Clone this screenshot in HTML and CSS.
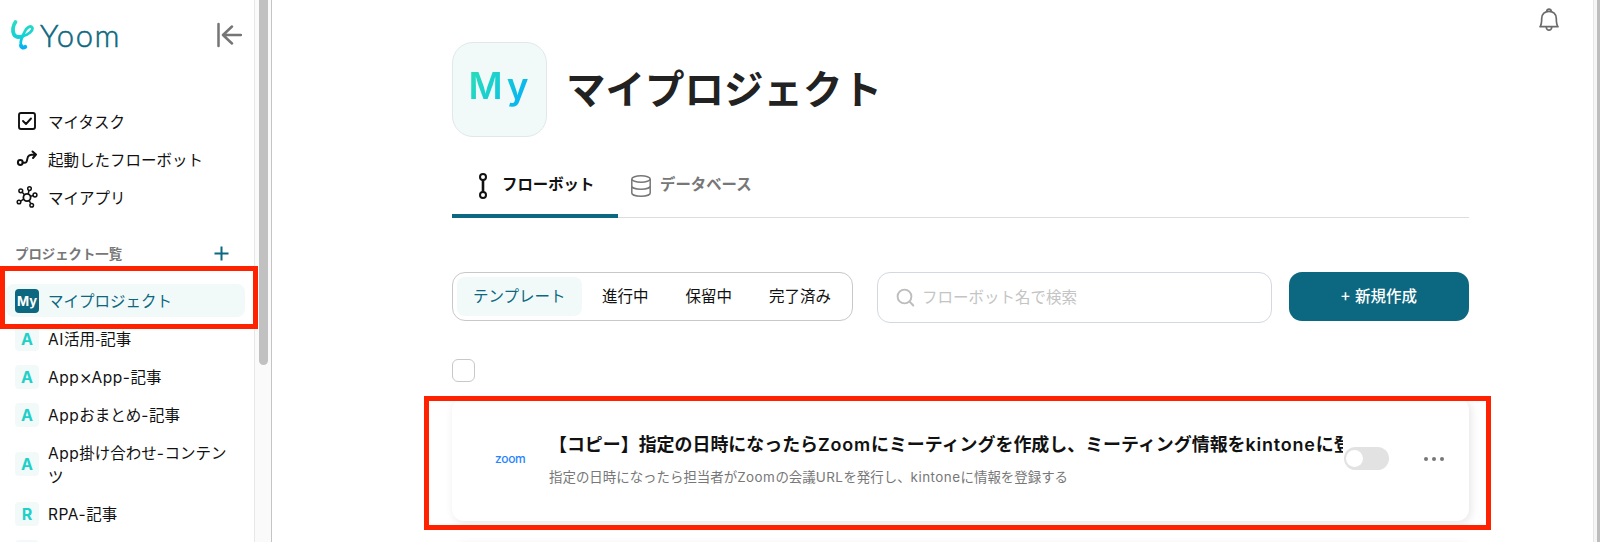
FILE: index.html
```
<!DOCTYPE html>
<html lang="ja">
<head>
<meta charset="utf-8">
<title>Yoom</title>
<link rel="stylesheet" href="styles.css">
</head>
<body>
<div class="app">
  <aside class="sidebar">
    <div class="brand">
      <svg class="brand-mark" width="24" height="32" viewBox="0 0 24 32" fill="none" stroke="url(#g)" stroke-linecap="round" stroke-linejoin="round">
        <defs><linearGradient id="g" x1="0" y1="0" x2="0" y2="32" gradientUnits="userSpaceOnUse"><stop offset=".1" stop-color="#2bdcc0"/><stop offset=".6" stop-color="#10d0d8"/><stop offset="1" stop-color="#00a6ff"/></linearGradient></defs>
        <path stroke-width="3.800" d="M5.500 3C3 6.500 2 12 4 15.500C5.500 18 8.500 18.500 12 17.500"/>
        <path stroke-width="2.800" d="M12 17.500C18.500 16 23.500 11.500 22.200 8.500C20.500 6 16 9 14.500 13C12.500 17.500 10.500 21 10.800 24"/>
        <path stroke-width="4" d="M11 26.500C11.500 29 13.500 29 15.200 27.800"/>
      </svg>
      <span class="brand-name">Yoom</span>
      <svg class="collapse" width="26" height="26" viewBox="0 0 26 26" fill="none" stroke="#757575" stroke-width="2.500" stroke-linecap="round" stroke-linejoin="round"><path d="M2.500 2V24M25 13H7M16 4.500L7 13L16 21.500"/></svg>
    </div>
    <nav class="menu">
      <a class="menu-item"><svg width="22" height="22" viewBox="0 0 22 22" fill="none" stroke="#111" stroke-width="1.900" stroke-linecap="round" stroke-linejoin="round"><rect x="3" y="3" width="16" height="16" rx="2"/><path d="M7 11L10 14L15 8.500"/></svg>マイタスク</a>
      <a class="menu-item"><svg width="22" height="22" viewBox="0 0 22 22" fill="none" stroke="#111" stroke-width="2" stroke-linecap="round" stroke-linejoin="round"><circle cx="4.300" cy="14.500" r="2.400"/><path d="M6.700 14.500C10.500 15.500 11 13.500 11.300 11C11.700 7.500 13.500 6.500 19.500 6.500M16.500 3.500L20 6.500L17 10"/></svg>起動したフローボット</a>
      <a class="menu-item"><svg width="22" height="22" viewBox="0 0 22 22" fill="none" stroke="#111" stroke-width="1.500"><circle cx="11" cy="11.500" r="3.600" stroke-width="1.800"/><circle cx="4.800" cy="4.800" r="1.900"/><circle cx="13.500" cy="2.600" r="1.800"/><circle cx="19" cy="9" r="1.900"/><circle cx="15.700" cy="19.300" r="1.800"/><circle cx="3" cy="16" r="1.800"/><path d="M6.200 6.300L8.500 8.800M13 4.300L12.200 8M17.100 9.500L14.500 10.400M14.800 17.700L13.100 14.600M4.600 15.100L7.700 13.200"/></svg>マイアプリ</a>
    </nav>
    <div class="section-head"><span>プロジェクト一覧</span><svg width="15" height="15" viewBox="0 0 15 15" stroke="#0c6780" stroke-width="2"><path d="M7.500 .500V14.500M.500 7.500H14.500"/></svg></div>
    <nav class="projects">
      <a class="project project-active"><span class="badge badge-solid">My</span><span class="label">マイプロジェクト</span></a>
      <a class="project"><span class="badge">A</span><span><span class="latin">AI</span>活用-記事</span></a>
      <a class="project"><span class="badge">A</span><span><span class="latin">App<span class="cross">×</span>App-</span>記事</span></a>
      <a class="project"><span class="badge">A</span><span><span class="latin">App</span>おまとめ<span class="latin">-</span>記事</span></a>
      <a class="project project-tall"><span class="badge">A</span><span><span class="latin">App</span>掛け合わせ<span class="latin">-</span>コンテン<br>ツ</span></a>
      <a class="project"><span class="badge">R</span><span><span class="latin">RPA-</span>記事</span></a>
      <a class="project"><span class="badge"></span></a>
    </nav>
    <div class="highlight highlight-side"></div>
  </aside>
  <div class="scroll-track"><div class="scroll-thumb"></div></div>
  <main class="main">
    <header class="hero">
      <div class="avatar"><span class="avatar-text">My</span></div>
      <h1 class="title">マイプロジェクト</h1>
    </header>
    <div class="tabs">
      <div class="tab tab-active"><svg width="12" height="26" viewBox="0 0 12 26" fill="none" stroke="#111" stroke-width="2"><circle cx="6" cy="4" r="3"/><circle cx="6" cy="22" r="3"/><path stroke-width="2.600" d="M6 7V19"/></svg><span class="tab-label">フローボット</span></div>
      <div class="tab"><svg width="22" height="24" viewBox="0 0 22 24" fill="none" stroke="#777" stroke-width="1.500"><ellipse cx="11" cy="5" rx="9.200" ry="3.200"/><path d="M1.800 5V19C1.800 20.800 5.900 22.200 11 22.200S20.200 20.800 20.200 19V5M1.800 12C1.800 13.800 5.900 15.200 11 15.200S20.200 13.800 20.200 12"/></svg><span class="tab-label">データベース</span></div>
    </div>
    <div class="toolbar">
      <div class="segments">
        <span class="segment segment-active">テンプレート</span><span class="segment">進行中</span><span class="segment">保留中</span><span class="segment">完了済み</span>
      </div>
      <div class="search"><svg width="19" height="19" viewBox="0 0 19 19" fill="none" stroke="#bdbdbd" stroke-width="1.900" stroke-linecap="round"><circle cx="8.500" cy="8.500" r="6.900"/><path d="M13.500 13.500L17.300 17.500"/></svg><span class="placeholder">フローボット名で検索</span></div>
      <div class="create"><span class="create-plus">+</span>新規作成</div>
    </div>
    <div class="checkbox"></div>
    <div class="cards">
      <article class="card">
        <div class="service"><span>zoom</span></div>
        <div class="card-body">
          <div class="card-title">【コピー】指定の日時になったら<span class="latin-wide">Zoom</span>にミーティングを作成し、ミーティング情報を<span class="latin-wide">kintone</span>に登録する</div>
          <div class="card-desc">指定の日時になったら担当者が<span class="latin">Zoom</span>の会議<span class="latin">URL</span>を発行し、<span class="latin">kintone</span>に情報を登録する</div>
        </div>
        <div class="toggle"><div class="knob"></div></div>
        <div class="more"><i></i><i></i><i></i></div>
      </article>
      <article class="card"></article>
      <div class="highlight highlight-card"></div>
    </div>
    <svg class="bell" width="22" height="26" viewBox="0 0 22 26" fill="none" stroke="#6b6b6b" stroke-width="1.700" stroke-linejoin="round"><path d="M2 19.700H20C18.300 17.700 18.300 16 18.300 11.500C18.300 7 15 4.300 11 4.300S3.700 7 3.700 11.500C3.700 16 3.700 17.700 2 19.700ZM8.800 4.500C8.600 1.200 13.400 1.200 13.200 4.500M8.300 20.500C8.800 24 13.200 24 13.700 20.500"/></svg>
  </main>
  <div class="edge"></div>
</div>
</body>
</html>
```
FILE: styles.css
```
* { box-sizing: border-box; }
body {
  margin: 0;
  background: #fff;
  color: #111;
  font-family: "Noto Sans CJK JP", sans-serif;
  font-size: 15.5px;
  line-height: 22px;
}
.app { display: flex; height: 542px; overflow: hidden; }
.latin { font-family: Inter, sans-serif; letter-spacing: .035em; }
.latin-wide { font-family: Inter, sans-serif; font-weight: 600; letter-spacing: .045em; }
.cross { font-size: 20px; font-weight: 300; line-height: 16px; vertical-align: -1px; letter-spacing: -1px; }

.sidebar { position: relative; width: 254px; flex: none; }
.brand { display: flex; align-items: center; height: 70px; padding: 0 12px 0 10px; }
.brand-name {
  margin: 0 0 1px 6px;
  font: 300 31px/32px Lato, sans-serif;
  letter-spacing: 1.6px;
  color: #0c6780;
  -webkit-text-stroke: .5px #0c6780;
}
.collapse { margin-left: auto; }
.menu { padding: 32px 0 0 16px; }
.menu-item { display: flex; align-items: center; gap: 10px; height: 38px; }
.section-head {
  display: flex;
  align-items: center;
  justify-content: space-between;
  height: 38px;
  margin-top: 18px;
  padding: 0 25px 0 15px;
  font-size: 13.4px;
  font-weight: 700;
  color: #777;
}
.projects { display: flex; flex-direction: column; gap: 5px; padding: 12px 9px 0 6px; }
.project { display: flex; align-items: center; gap: 9px; height: 33px; flex: none; padding-left: 9px; border-radius: 8px; }
.project-tall { height: 56px; }
.project-active { background: #f2faf9; color: #0c6780; }
.label { padding-bottom: 2px; }
.badge {
  width: 24px;
  height: 24px;
  border-radius: 4px;
  background: #f2faf9;
  color: #1fd0c8;
  font: 700 16px/24px Inter, sans-serif;
  text-align: center;
}
.badge-solid { background: #0c6780; color: #fff; font-size: 13px; }

.highlight { position: absolute; border: 5px solid #ff2200; pointer-events: none; }
.highlight-side { left: 0; top: 266px; width: 258px; height: 63px; z-index: 2; }
.highlight-card { left: -28px; top: -2px; width: 1067px; height: 134px; }

.scroll-track { width: 18px; flex: none; padding-left: 4px; background: #fafafa; border-left: 1px solid #e8e8e8; border-right: 1px solid #c4c4c4; }
.scroll-thumb { width: 9px; height: 365px; border-radius: 0 0 5px 5px; background: #c1c1c1; }
.main { position: relative; flex: 1; padding: 42px 124px 0 180px; }
.edge { width: 7px; flex: none; background: #f6f6f6; border-left: 1px solid #e6e6e6; border-right: 3px solid #bdbdbd; }
.bell { position: absolute; left: 1266px; top: 7px; }

.hero { display: flex; align-items: center; gap: 19px; height: 95px; }
.avatar { width: 95px; height: 95px; border: 1px solid #dfe9e9; border-radius: 21px; background: #f2faf9; text-align: center; }
.avatar-text {
  display: inline-block;
  padding-left: 2px;
  font: 600 37px/48px Inter, sans-serif;
  letter-spacing: 4px;
  margin-top: 19px;
  background: linear-gradient(120deg, #2bdcb8 10%, #18cfd2 45%, #00a8ff);
  -webkit-background-clip: text;
  background-clip: text;
  color: transparent;
}
.title { margin: 0; padding-bottom: 5px; font-size: 39.5px; line-height: 48px; font-weight: 700; color: #222; }

.tabs { display: flex; width: 1017px; height: 81px; border-bottom: 1px solid #ddd; }
.tab { display: flex; align-items: center; gap: 8px; height: 81px; padding: 16px 12px 0; font-weight: 700; color: #777; }
.tab-active { width: 166px; gap: 13px; padding: 16px 0 0 25px; color: #111; background: linear-gradient(#0c6780, #0c6780) bottom / 100% 4px no-repeat; }
.tab-label { padding-bottom: 5px; font-size: 15.4px; white-space: nowrap; }

.toolbar { display: flex; width: 1017px; margin-top: 54px; align-items: flex-start; }
.segments { display: flex; width: 401px; height: 49px; padding: 4px; border: 1px solid #c8c8c8; border-radius: 13px; }
.segment { display: flex; align-items: center; height: 39px; padding: 0 17px 3px 20px; white-space: nowrap; }
.segment-active { width: 126px; padding: 0 0 3px 16px; border-radius: 8px; background: #f2faf9; color: #0c6780; }
.search { display: flex; align-items: center; gap: 7px; width: 395px; height: 51px; margin-left: 24px; padding-left: 18px; border: 1px solid #d4d8e0; border-radius: 13px; color: #c4c4c4; }
.placeholder { padding-bottom: 3px; }
.create { display: flex; align-items: center; justify-content: center; width: 180px; height: 49px; margin-left: auto; padding-bottom: 3px; border-radius: 13px; background: #0c6780; color: #fff; font-weight: 500; }
.create-plus { margin-right: 5px; }
.checkbox { width: 23px; height: 23px; margin-top: 36px; border: 1px solid #c8c8c8; border-radius: 6px; }

.cards { position: relative; display: flex; flex-direction: column; gap: 22px; width: 1017px; margin-top: 16px; }
.card { display: flex; align-items: center; height: 123px; flex: none; border-radius: 12px; background: #fff; box-shadow: 2px 2px 10px rgba(0, 0, 0, .1); }
.service { width: 97px; padding: 0 0 2px 43px; font: 500 12px/14px Inter, sans-serif; letter-spacing: -.3px; color: #2684ff; }
.card-body { width: 794px; overflow: hidden; white-space: nowrap; padding-bottom: 3px; }
.card-title { font-size: 17.95px; line-height: 30px; font-weight: 700; color: #111; }
.card-desc { margin-top: 4px; font-size: 13.450px; line-height: 24px; color: #777; }
.toggle { width: 45px; height: 23px; margin: 0 0 2px 1px; padding: 3px 2px; border-radius: 12px; background: #e2e2e2; }
.knob { width: 17px; height: 17px; border-radius: 50%; background: #fff; }
.more { display: flex; gap: 4px; margin: 0 0 1px 35px; }
.more i { width: 4px; height: 4px; border-radius: 50%; background: #777; }
```
